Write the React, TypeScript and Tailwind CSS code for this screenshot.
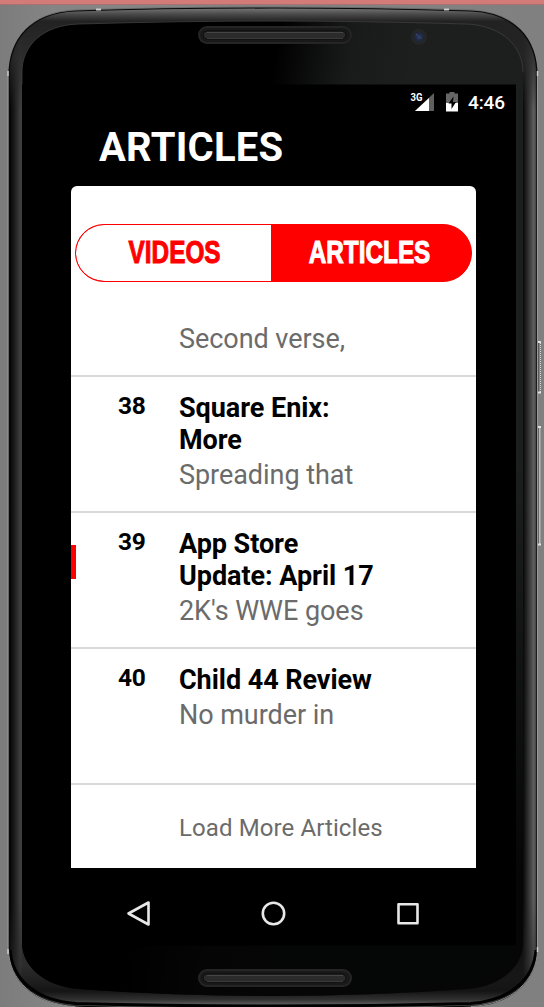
type Article = { rank: string; title: string; summary: string };

const articles: Article[] = [
  { rank: "38", title: "Square Enix: More", summary: "Spreading that" },
  { rank: "39", title: "App Store Update: April 17", summary: "2K's WWE goes" },
  { rank: "40", title: "Child 44 Review", summary: "No murder in" },
];

const outer =
  "M9 76C9 38 32 13 75 11Q170 8 273 8T471 11C514 13 537 38 537 76V949C537 978 514 1004 472 1006Q370 1010 273 1010T75 1006C32 1004 9 978 9 949Z";
const inner =
  "M22 72C22 46 42 25 79 24Q180 21 273 21T467 24C504 26 523 48 523 72V943C523 966 502 986 468 989Q370 996 273 996T78 989C44 986 22 966 22 943Z";

function SpeakerSlot({ y }: { y: number }) {
  return (
    <g>
      <rect x="198" y={y} width="154" height="18" rx="9" fill="#252525" />
      <rect x="200" y={y + 2} width="150" height="14" rx="7" fill="#191919" />
      <rect x="203" y={y + 5} width="143" height="8" rx="4" fill="#2b2b2b" stroke="#0d0d0d" />
      <path d={`M207 ${y + 6.5}H343`} stroke="#454545" />
      <path d={`M207 ${y + 12.5}H343`} stroke="#3a3a3a" />
    </g>
  );
}

function DeviceShell() {
  return (
    <svg className="absolute inset-0" width="544" height="1007" viewBox="0 0 544 1007" aria-hidden="true">
      <defs>
        <linearGradient id="edge" gradientUnits="userSpaceOnUse" x1="9" x2="537" y1="0" y2="0">
          <stop offset="0" stopColor="#000" />
          <stop offset=".01" stopColor="#1b1b1b" />
          <stop offset=".022" stopColor="#404040" />
          <stop offset=".026" stopColor="#333" />
          <stop offset=".955" stopColor="#050505" />
          <stop offset=".973" stopColor="#050505" />
          <stop offset=".988" stopColor="#444" />
          <stop offset=".994" stopColor="#606060" />
          <stop offset="1" stopColor="#333" />
        </linearGradient>
        <linearGradient id="topEdge" gradientUnits="userSpaceOnUse" x1="0" x2="0" y1="8" y2="110">
          <stop offset="0" stopColor="#777" />
          <stop offset=".06" stopColor="#4a4a4a" />
          <stop offset=".13" stopColor="#222" />
          <stop offset=".5" stopColor="#2b2b2b" stopOpacity=".8" />
          <stop offset="1" stopColor="#222" stopOpacity="0" />
        </linearGradient>
        <linearGradient id="bottomEdge" gradientUnits="userSpaceOnUse" x1="0" x2="0" y1="900" y2="1007">
          <stop offset="0" stopColor="#222" stopOpacity="0" />
          <stop offset=".6" stopColor="#252525" stopOpacity=".5" />
          <stop offset=".85" stopColor="#141414" />
          <stop offset=".93" stopColor="#303030" />
          <stop offset=".97" stopColor="#555" />
        </linearGradient>
        <linearGradient id="glare" gradientUnits="userSpaceOnUse" x1="285" x2="420" y1="0" y2="22">
          <stop offset="0" stopColor="#1c1e1d" stopOpacity="0" />
          <stop offset=".55" stopColor="#191a1a" />
          <stop offset="1" stopColor="#1d1f1e" />
        </linearGradient>
        <linearGradient id="fade" x1="0" x2="0" y1="0" y2="1">
          <stop offset=".45" stopColor="#000" stopOpacity="0" />
          <stop offset=".88" stopColor="#000" stopOpacity=".82" />
        </linearGradient>
        <linearGradient id="backdrop" x1="0" x2="1" y1="0" y2="0">
          <stop offset="0" stopColor="#7c7c7c" />
          <stop offset=".1" stopColor="#858585" />
          <stop offset="1" stopColor="#808080" />
        </linearGradient>
        <radialGradient id="lens">
          <stop offset="0" stopColor="#35426e" />
          <stop offset=".5" stopColor="#222d4c" />
          <stop offset="1" stopColor="#20232c" />
        </radialGradient>
      </defs>
      <rect width="544" height="1007" fill="url(#backdrop)" />
      <path d={outer} transform="translate(0 -1)" fill="none" stroke="#6b6b6b" strokeWidth="1" />
      <path d={outer} fill="url(#edge)" />
      <path d={outer} fill="url(#topEdge)" />
      <path d={outer} fill="url(#bottomEdge)" />
      <path d={outer} fill="none" stroke="#0a0a0a" strokeWidth="1.2" />
      <path d="M8 76V949" stroke="#999" />
      <path d="M537.5 76V949" stroke="#999" />
      <path
        d="M10 950C12 979 36 1001 76 1003.500Q170 1006 273 1006T470 1003.500C510 1001 534 979 536 950"
        fill="none"
        stroke="#000"
        strokeWidth="3"
      />
      <path d="M8.500 950C9 979 33 1004 75 1006.500M537.500 950C537 979 513 1004 471 1006.500" fill="none" stroke="#999" strokeWidth=".9" />
      <path d={inner} fill="#000" />
      <path d={inner} fill="url(#glare)" />
      <path d={inner} fill="url(#fade)" />
      <path d="M22 943V72C22 46 42 25 79 24Q180 21 273 21T467 24C504 26 523 48 523 72" fill="none" stroke="#404040" strokeWidth=".8" />
      <rect x="22" y="84.500" width="494" height="861" fill="#000" />
      <path d="M96 9.500h5M444 9.500h5" stroke="#ccc" strokeWidth="2" />
      <path d="M8 71v5M8 949v5M537.500 71v5M537.500 947v5" stroke="#ccc" strokeWidth="1.5" />
      <SpeakerSlot y={26} />
      <SpeakerSlot y={969} />
      <circle cx="419" cy="37" r="8" fill="#252626" />
      <circle cx="419" cy="37" r="5.500" fill="url(#lens)" />
      <circle cx="416.500" cy="34.500" r=".8" fill="#46537a" />
      <circle cx="421" cy="38" r=".6" fill="#46537a" />
      <rect x="538" y="342" width="1" height="51" fill="#5c5c5c" />
      <rect x="539" y="342" width="1" height="51" fill="#858585" />
      <path d="M540.500 343v50" stroke="#d5d5d5" strokeDasharray="1 1" />
      <rect x="538" y="427" width="1" height="118" fill="#666" />
      <rect x="539" y="427" width="1.500" height="118" fill="#b8b8b8" />
      <path d="M538 342h3M538 392.500h3M538 427h3M538 544.500h3" stroke="#e0e0e0" strokeWidth="2" />
      <rect width="544" height="4" fill="#d27b78" />
      <rect y="4" width="544" height="1" fill="#a87070" />
    </svg>
  );
}

function StatusBar() {
  return (
    <div className="flex h-[36px] shrink-0 items-center pl-[388px] text-white">
      <svg width="28" height="24" viewBox="410 90 28 24" aria-hidden="true">
        <path d="M434 93V111H415Z" fill="#5f5f5f" />
        <path d="M429 98V111H415Z" fill="#fff" />
        <text x="410.500" y="101" fill="#fff" fontFamily="Roboto, sans-serif" fontSize="11" fontWeight="700" textLength="12" lengthAdjust="spacingAndGlyphs">3G</text>
      </svg>
      <svg className="ml-[6px]" width="18" height="24" viewBox="444 90 18 24" aria-hidden="true">
        <path d="M446 93.500H449.500V92H454.500V93.500H458V103H446Z" fill="#666" />
        <path d="M446 103H458V111.500H446Z" fill="#fff" />
        <path d="M453.500 96.500L448.500 103.500H451.500V109L456 102H453Z" fill="#000" />
      </svg>
      <span className="ml-[6px] pt-px text-[19px] font-medium leading-[24px] tracking-[-0.1px]">4:46</span>
    </div>
  );
}

function Row({ item, active }: { item: Article; active: boolean }) {
  return (
    <li className="relative flex h-[136px] border-t-2 border-[#d9d9d9] pt-[15px]">
      {active && <span className="absolute left-0 top-[32px] h-[34px] w-[5px] bg-[#ff0000]" />}
      <span className="ml-[47px] w-[61px] shrink-0 text-[24.500px] font-bold leading-[28px] tracking-[-0.2px] text-black">{item.rank}</span>
      <div className="w-[210px]">
        <h2 className="text-[27px] font-bold leading-[32px] tracking-[-0.05px] text-black">{item.title}</h2>
        <p className="mt-[2px] text-[27px] leading-[34px] tracking-[-0.05px] text-[#6b6b6b]">{item.summary}</p>
      </div>
    </li>
  );
}

export default function App() {
  return (
    <div className="relative h-[1007px] w-[544px] overflow-hidden font-['Roboto',sans-serif]">
      <DeviceShell />
      <div className="relative flex h-full flex-col pb-[61px] pl-[22px] pr-[28px] pt-[84px]">
        <StatusBar />
        <h1 className="ml-[77px] h-[66px] pt-[4px] text-[40px] font-bold leading-[48px] tracking-[0.2px] text-white">ARTICLES</h1>
        <main className="ml-[49px] flex h-[682px] w-[405px] shrink-0 flex-col overflow-hidden rounded-t-[6px] bg-white">
          <div className="ml-[4px] mt-[38px] flex h-[58px] w-[397px] shrink-0 overflow-hidden rounded-[29px] border border-[#ff0000] bg-[#ff0000] font-['Liberation_Sans',sans-serif] text-[31px] font-bold leading-[56px]">
            <button className="flex w-[195px] items-center justify-center rounded-l-[28px] bg-white pl-[2px] text-[#ff0000]">
              <span className="scale-x-[0.785] [-webkit-text-stroke:1px_currentColor]">VIDEOS</span>
            </button>
            <button className="flex flex-1 items-center justify-center bg-[#ff0000] pr-[4px] text-white">
              <span className="scale-x-[0.785] [-webkit-text-stroke:1px_currentColor]">ARTICLES</span>
            </button>
          </div>
          <p className="ml-[108px] h-[93px] shrink-0 pt-[40px] text-[27px] leading-[34px] tracking-[-0.05px] text-[#6b6b6b]">Second verse,</p>
          <ul className="shrink-0">
            {articles.map((item) => (
              <Row key={item.rank} item={item} active={item.rank === "39"} />
            ))}
          </ul>
          <button className="flex-1 border-t-2 border-[#d9d9d9] pl-[108px] pt-[2px] text-left text-[24px] tracking-[0.1px] text-[#6b6b6b]">Load More Articles</button>
        </main>
        <nav className="flex flex-1 items-center pl-[100px] pt-[14px]">
          <svg width="32" height="32" viewBox="122 898 32 32" fill="none" stroke="#e8e8e8" strokeWidth="2.600" strokeLinejoin="round">
            <path d="M128.500 913.500L148.500 902.500V924.500Z" />
          </svg>
          <svg className="ml-[103px]" width="32" height="32" viewBox="257 898 32 32" fill="none" stroke="#e8e8e8" strokeWidth="2.600">
            <circle cx="273.500" cy="913.500" r="10.700" />
          </svg>
          <svg className="ml-[103px]" width="32" height="32" viewBox="392 898 32 32" fill="none" stroke="#e8e8e8" strokeWidth="2.600" strokeLinejoin="round">
            <rect x="398.500" y="904.200" width="19" height="19" />
          </svg>
        </nav>
      </div>
    </div>
  );
}
